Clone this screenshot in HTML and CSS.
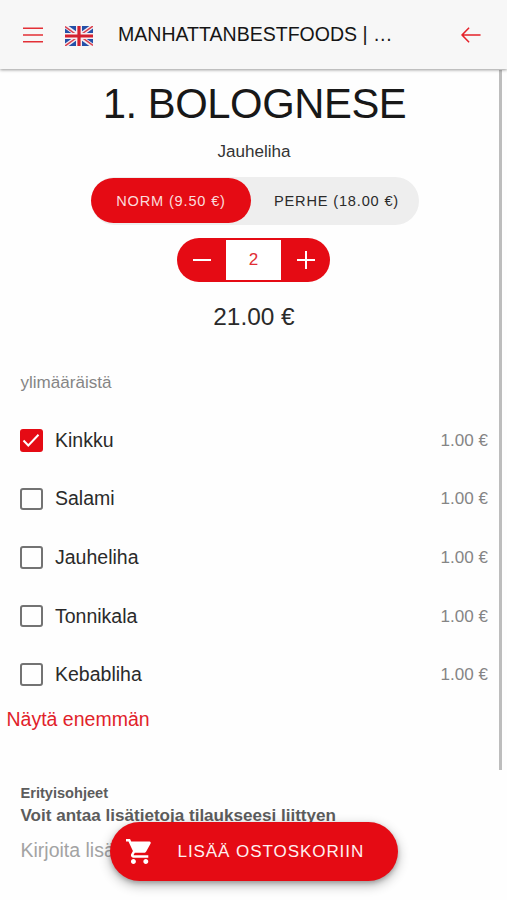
FILE: index.html
```html
<!DOCTYPE html>
<html lang="fi">
<head>
<meta charset="utf-8">
<meta name="viewport" content="width=device-width">
<title>Manhattanbestfoods</title>
<link rel="stylesheet" href="styles.css">
</head>
<body>
<header class="toolbar">
  <svg class="menu-icon" viewBox="0 0 20 16"><path d="M0 1.2h20M0 8h20M0 14.7h20"/></svg>
  <svg class="flag" viewBox="0 0 28 20">
    <path fill="#2450a8" d="M0 0h28v20H0z"/>
    <path stroke="#f3edf3" stroke-width="4.2" d="M0 0l28 20M28 0L0 20"/>
    <path stroke="#d9404e" stroke-width="1.5" d="M0 .6l14 10M28 0L14 10M28 19.4L14 9.4M0 20l14-10"/>
    <path stroke="#f6eef1" stroke-width="6" d="M14 0v20M0 10h28"/>
    <path stroke="#d3202f" stroke-width="3.2" d="M14 0v20M0 10h28"/>
  </svg>
  <div class="brand">MANHATTANBESTFOODS | …</div>
  <svg class="back-icon" viewBox="0 0 20 16"><path d="M19 8H1M7.6 1.2L1 8l6.6 6.8"/></svg>
</header>
<main class="content">
  <h1 class="title">1. BOLOGNESE</h1>
  <p class="subtitle">Jauheliha</p>
  <div class="segment">
    <button class="size size-active">NORM (9.50 €)</button>
    <button class="size">PERHE (18.00 €)</button>
  </div>
  <div class="stepper">
    <button class="step"><svg viewBox="0 0 20 20"><path d="M1 10h18"/></svg></button>
    <span class="quantity">2</span>
    <button class="step"><svg viewBox="0 0 20 20"><path d="M1 10h18M10 1v18"/></svg></button>
  </div>
  <p class="total">21.00 €</p>
  <h2 class="group">ylimääräistä</h2>
  <ul class="extras">
    <li class="extra"><span class="box box-checked"><svg viewBox="0 0 22 22"><path d="M3.5 11.5l4.8 5L18.5 5.8"/></svg></span><span class="name">Kinkku</span><span class="price">1.00 €</span></li>
    <li class="extra"><span class="box"></span><span class="name">Salami</span><span class="price">1.00 €</span></li>
    <li class="extra"><span class="box"></span><span class="name">Jauheliha</span><span class="price">1.00 €</span></li>
    <li class="extra"><span class="box"></span><span class="name">Tonnikala</span><span class="price">1.00 €</span></li>
    <li class="extra"><span class="box"></span><span class="name">Kebabliha</span><span class="price">1.00 €</span></li>
  </ul>
  <a class="more">Näytä enemmän</a>
  <section class="notes">
    <div class="notes-title">Erityisohjeet</div>
    <div class="notes-hint">Voit antaa lisätietoja tilaukseesi liittyen</div>
    <div class="notes-input">Kirjoita lisä</div>
  </section>
</main>
<div class="scrollbar"></div>
<button class="add">
  <svg class="cart" viewBox="1 2 21 20"><path d="M7 18c-1.1 0-1.99.9-1.99 2S5.900 22 7 22s2-.9 2-2-.9-2-2-2zM1 2v2h2l3.600 7.590-1.350 2.450c-.16.28-.25.61-.25.96 0 1.100.9 2 2 2h12v-2H7.420c-.14 0-.25-.11-.25-.25l.03-.12.9-1.630h7.450c.75 0 1.410-.41 1.750-1.030l3.580-6.490A1 1 0 0 0 20 4H5.210l-.94-2H1zm16 16c-1.100 0-1.990.9-1.990 2s.89 2 1.990 2 2-.9 2-2-.9-2-2-2z"/></svg>
  <span>LISÄÄ OSTOSKORIIN</span>
</button>
</body>
</html>
```
FILE: styles.css
```css
* { box-sizing: border-box; }
body {
  margin: 0;
  height: 900px;
  overflow: hidden;
  position: relative;
  background: #fefefe;
  color: #2a2a2a;
  font: 17.07px "Liberation Sans", Arial, sans-serif;
}
h1, h2, p, ul { margin: 0; padding: 0; font-weight: 400; }
button { border: 0; padding: 0; font: inherit; color: inherit; background: none; }
svg { display: block; fill: none; flex: none; }

.toolbar {
  height: 69px;
  display: flex;
  align-items: center;
  padding: 0 26px 0 23px;
  background: #f7f7f7;
  box-shadow: 0 1px 3px rgba(0, 0, 0, .4);
  position: relative;
  z-index: 1;
}
.menu-icon { width: 20px; height: 16px; stroke: #e33036; stroke-width: 1.6; }
.flag { width: 28px; height: 20px; margin: 2px 0 0 22px; }
.brand { flex: 1; margin: 0 0 2px 25px; font-size: 19.55px; line-height: 24px; white-space: nowrap; color: #151515; }
.back-icon { width: 20px; height: 16px; stroke: #e5222a; stroke-width: 1.6; stroke-linecap: round; stroke-linejoin: round; }

.content { display: flex; flex-direction: column; align-items: center; }
.title { margin: 10px 0 0 2px; font-size: 41.8px; line-height: 50px; letter-spacing: -.45px; color: #181818; }
.subtitle { margin: 13px 0 0 1px; line-height: 20px; color: #333; }

.segment {
  display: flex;
  width: 328px;
  height: 48px;
  margin: 15px 0 0 3px;
  border-radius: 24px;
  background: #eee;
}
.size { flex: 1; padding-left: 3px; border-radius: 23px; font-size: 14.6px; letter-spacing: .82px; }
.size-active { flex: none; width: 160px; height: 45px; padding: 0; margin: 1px 0 0; background: #e50b14; color: #fbdcdc; }

.stepper {
  display: flex;
  width: 153px;
  height: 44px;
  margin-top: 13px;
  padding: 2px 0;
  border-radius: 22px;
  background: #e50b14;
}
.step { flex: 1; display: grid; place-items: center; }
.step svg { width: 20px; height: 20px; stroke: #fff; stroke-width: 2; }
.quantity { width: 55px; background: #fff; color: #e12e34; line-height: 40px; text-align: center; }

.total { margin: 21px 0 0 1px; font-size: 24.4px; line-height: 28px; }

.group { align-self: stretch; margin: 42px 0 0 20.500px; font-size: 17.07px; line-height: 20px; color: #858585; }
.extras { align-self: stretch; margin-top: 18px; list-style: none; }
.extra { display: flex; align-items: center; height: 58.6px; padding: 0 19px 0 20px; }
.box { width: 22.500px; height: 22.500px; border: 2px solid #737373; border-radius: 3px; }
.box-checked { border: 0; background: #e50b14; }
.box-checked svg { width: 22px; height: 22px; stroke: #fff; stroke-width: 2; }
.name { flex: 1; margin-left: 12.500px; font-size: 19.5px; }
.price { margin-top: 1px; color: #858585; }
.more { align-self: flex-start; margin: 3px 0 0 6.500px; font-size: 19.5px; line-height: 24px; color: #e1222a; }

.notes { align-self: stretch; margin: 53px 0 0 20.500px; color: #5c5c5c; }
.notes-title { font-size: 14.6px; font-weight: 700; line-height: 18px; }
.notes-hint { margin-top: 3px; font-weight: 700; line-height: 22px; }
.notes-input { margin-top: 11px; font-size: 19.5px; line-height: 24px; color: #a3a3a3; }

.scrollbar { position: absolute; top: 70px; left: 499px; width: 3px; height: 700px; background: #bdbdbd; }
.add {
  position: absolute;
  left: 110px;
  top: 822px;
  width: 288px;
  height: 59px;
  display: flex;
  align-items: center;
  padding-left: 16px;
  border-radius: 30px;
  background: #e50b14;
  color: #fff0f0;
  letter-spacing: .9px;
  box-shadow: 0 4px 12px rgba(0, 0, 0, .3), 0 2px 4px rgba(0, 0, 0, .2);
}
.cart { width: 26px; height: 25px; margin-right: 25.500px; fill: #fff; }
```
